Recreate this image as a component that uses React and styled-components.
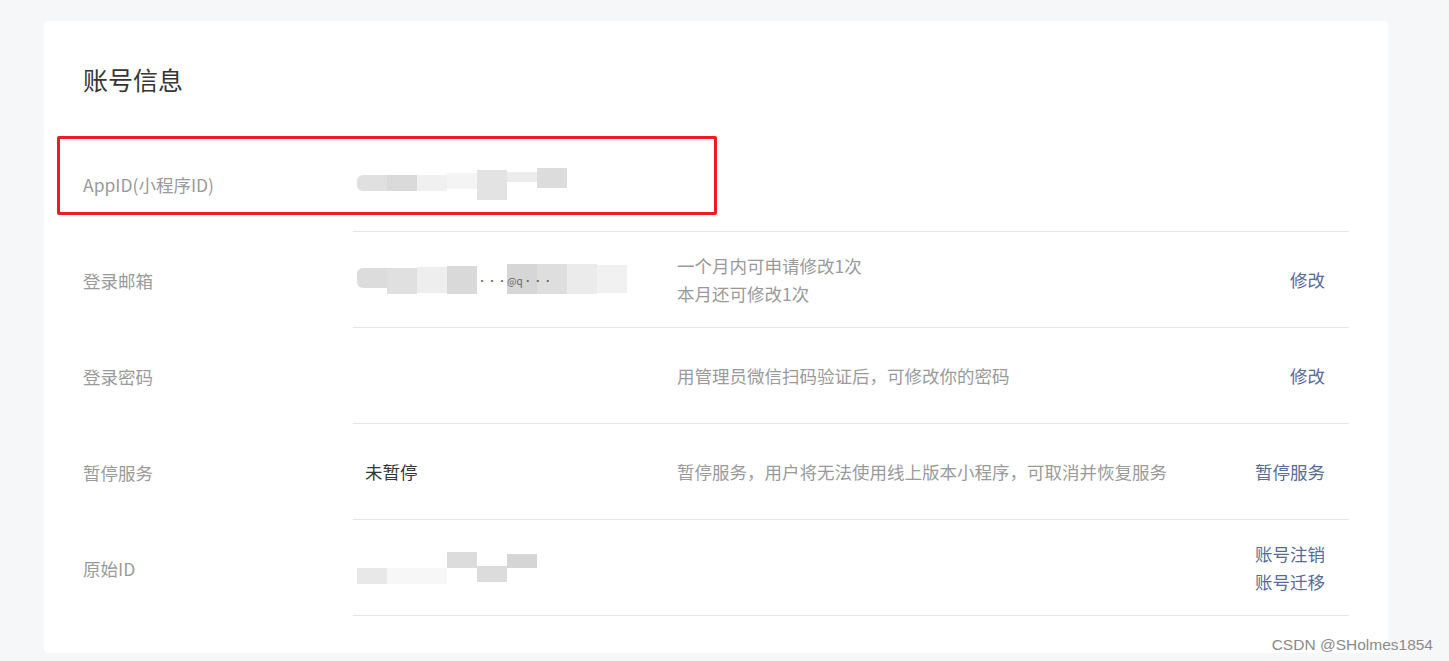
import styled, { createGlobalStyle } from "styled-components";

const GlobalStyle = createGlobalStyle`
  html, body {
    margin: 0;
    padding: 0;
    background: #f6f7f9;
  }
  body {
    font-family: "Noto Sans CJK SC", "Noto Sans", sans-serif;
  }
`;

const Page = styled.div`
  padding: 21px 61px 8px 44px;
  height: 661px;
  box-sizing: border-box;
  position: relative;
`;

const Card = styled.section`
  position: relative;
  background: #fff;
  border-radius: 4px;
  height: 632px;
  box-sizing: border-box;
  padding: 40px 39px 0 39px;
`;

const Title = styled.h2`
  margin: 0 0 39px;
  font-size: 25px;
  line-height: 36px;
  font-weight: 400;
  color: #353535;
`;

const Row = styled.div`
  display: grid;
  grid-template-columns: 270px 1fr;
  height: 96px;
`;

const Label = styled.div`
  display: flex;
  align-items: center;
  font-size: 17.5px;
  color: #9a9a9a;
`;

const Content = styled.div`
  display: grid;
  grid-template-columns: 320px 1fr auto;
  align-items: center;
  padding: 0 24px 0 4px;
  border-bottom: 1px solid #e7e7e7;
`;

const Value = styled.div`
  display: flex;
  align-items: center;
  padding-left: ${(p) => (p.$text ? "8px" : "0")};
  font-size: 17.5px;
  color: #353535;
`;

const Desc = styled.div`
  font-size: 17.5px;
  line-height: 28px;
  color: #9a9a9a;
`;

const Actions = styled.div`
  display: flex;
  flex-direction: column;
  align-items: flex-end;
  font-size: 17.5px;
  line-height: 28px;
`;

const Link = styled.a`
  color: #576b95;
  text-decoration: none;
  cursor: pointer;
`;

const Mosaic = styled.div`
  display: flex;
  height: 32px;
`;

const Tile = styled.span`
  position: relative;
  z-index: ${(p) => (p.$text ? 1 : 0)};
  width: ${(p) => p.$w}px;
  height: ${(p) => p.$h}px;
  margin-top: ${(p) => p.$top}px;
  background: ${(p) => p.$c};
  border-radius: ${(p) => (p.$round ? "6px 0 0 6px" : "0")};
  font-size: 10px;
  line-height: ${(p) => p.$h}px;
  color: #666;
  white-space: nowrap;
`;

const Marker = styled.div`
  position: absolute;
  left: 13px;
  top: 115px;
  width: 660px;
  height: 79px;
  box-sizing: border-box;
  border: 3px solid #ed1c24;
  border-radius: 2px;
  pointer-events: none;
`;

const Watermark = styled.div`
  position: absolute;
  right: 16px;
  bottom: 7px;
  font-family: "Liberation Sans", Arial, sans-serif;
  font-size: 15.5px;
  color: #8a8a8a;
  text-shadow: 0 0 2px #fff;
`;

const appIdTiles = [
  { w: 30, h: 16, top: 7, c: "#e0e0e0", round: true },
  { w: 30, h: 16, top: 7, c: "#dadada" },
  { w: 30, h: 16, top: 7, c: "#f0f0f0" },
  { w: 30, h: 16, top: 5, c: "#f4f4f4" },
  { w: 30, h: 30, top: 2, c: "#e3e3e3" },
  { w: 30, h: 10, top: 4, c: "#ececec" },
  { w: 30, h: 20, top: 0, c: "#dcdcdc" },
];

const emailTiles = [
  { w: 30, h: 20, top: 4, c: "#dcdcdc", round: true },
  { w: 30, h: 26, top: 4, c: "#e0e0e0" },
  { w: 30, h: 26, top: 3, c: "#eeeeee" },
  { w: 30, h: 28, top: 2, c: "#d9d9d9" },
  { w: 30, h: 10, top: 12, c: "#ffffff", text: "···@q···" },
  { w: 30, h: 30, top: 0, c: "#d6d6d6" },
  { w: 30, h: 30, top: 0, c: "#dedede" },
  { w: 30, h: 30, top: 0, c: "#ebebeb" },
  { w: 30, h: 28, top: 1, c: "#f1f1f1" },
];

const origTiles = [
  { w: 30, h: 16, top: 16, c: "#e8e8e8" },
  { w: 60, h: 16, top: 16, c: "#f7f7f7" },
  { w: 30, h: 16, top: 0, c: "#dcdcdc" },
  { w: 30, h: 16, top: 14, c: "#dcdcdc" },
  { w: 30, h: 14, top: 2, c: "#d5d5d5" },
];

const Blurred = ({ tiles }) => (
  <Mosaic>
    {tiles.map((t, i) => (
      <Tile key={i} $w={t.w} $h={t.h} $top={t.top} $c={t.c} $round={t.round} $text={!!t.text}>
        {t.text}
      </Tile>
    ))}
  </Mosaic>
);

const rows = [
  { label: "AppID(小程序ID)", value: <Blurred tiles={appIdTiles} /> },
  {
    label: "登录邮箱",
    value: <Blurred tiles={emailTiles} />,
    desc: ["一个月内可申请修改1次", "本月还可修改1次"],
    actions: ["修改"],
  },
  {
    label: "登录密码",
    desc: ["用管理员微信扫码验证后，可修改你的密码"],
    actions: ["修改"],
  },
  {
    label: "暂停服务",
    value: "未暂停",
    desc: ["暂停服务，用户将无法使用线上版本小程序，可取消并恢复服务"],
    actions: ["暂停服务"],
  },
  {
    label: "原始ID",
    value: <Blurred tiles={origTiles} />,
    actions: ["账号注销", "账号迁移"],
  },
];

const App = () => {
  return (
    <Page>
      <GlobalStyle />
      <Card>
        <Title>账号信息</Title>
        {rows.map((row) => (
          <Row key={row.label}>
            <Label>{row.label}</Label>
            <Content>
              <Value $text={typeof row.value === "string"}>{row.value}</Value>
              <Desc>
                {(row.desc || []).map((line) => (
                  <div key={line}>{line}</div>
                ))}
              </Desc>
              <Actions>
                {(row.actions || []).map((a) => (
                  <Link key={a}>{a}</Link>
                ))}
              </Actions>
            </Content>
          </Row>
        ))}
        <Marker />
      </Card>
      <Watermark>CSDN @SHolmes1854</Watermark>
    </Page>
  );
};

export default App;
